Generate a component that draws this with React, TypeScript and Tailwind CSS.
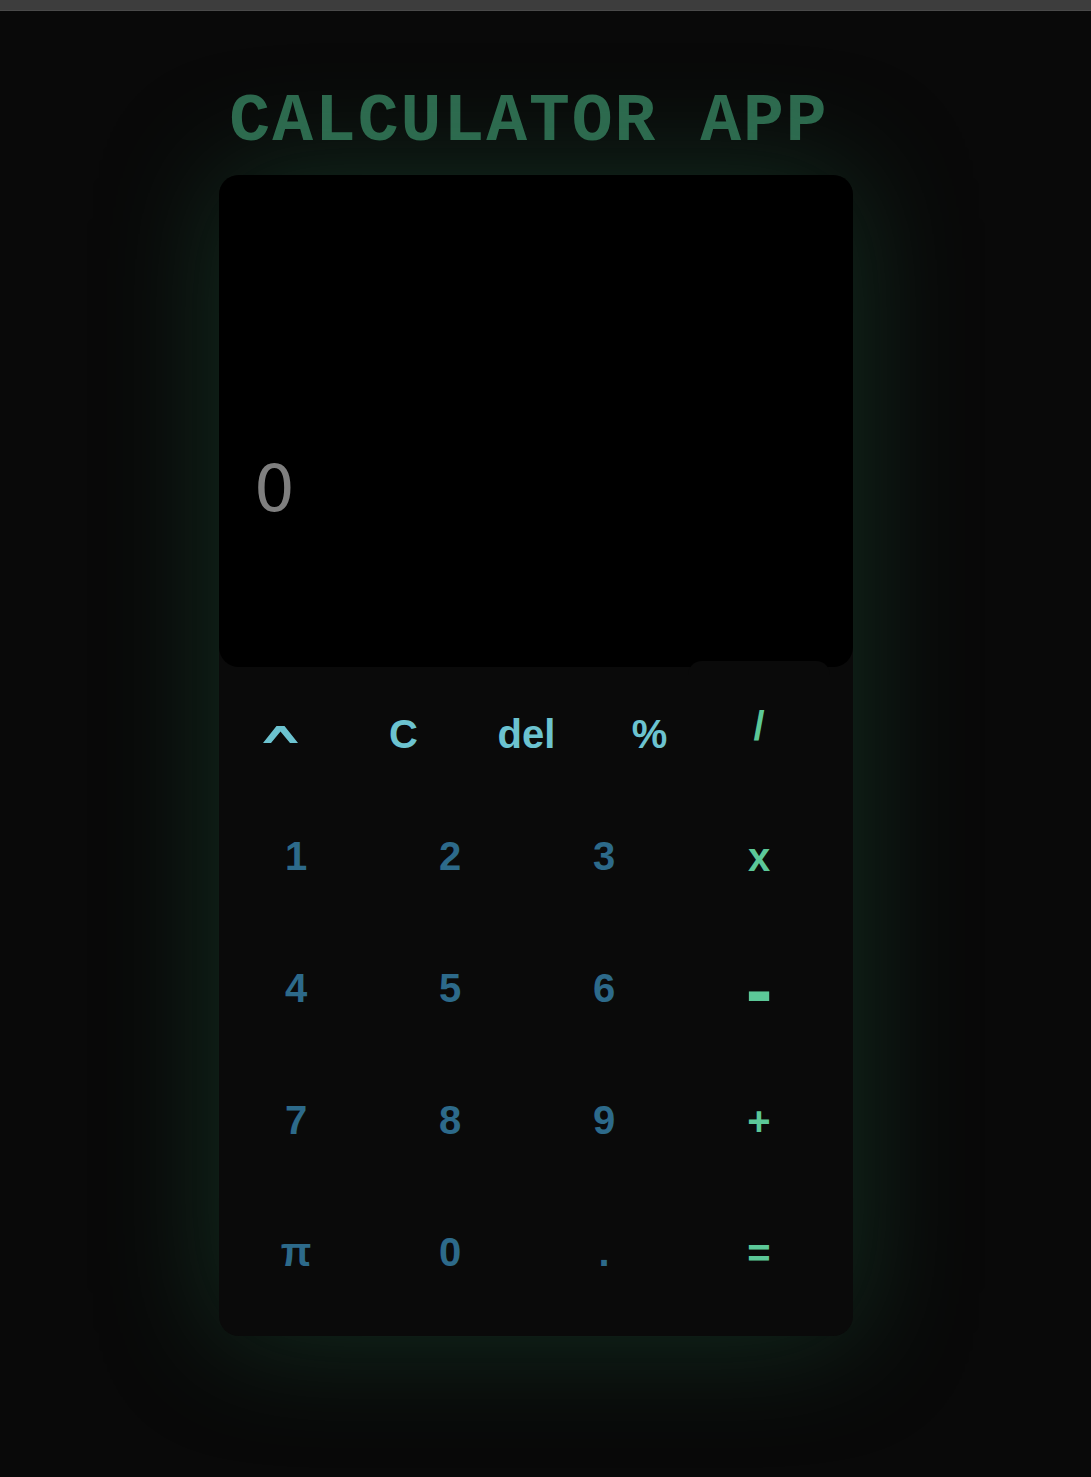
import React from "react";

const topKeys = ["C", "del", "%"];
const digitRows = [
  ["1", "2", "3"],
  ["4", "5", "6"],
  ["7", "8", "9"],
  ["π", "0", "."],
];

function Caret() {
  return (
    <svg width="35" height="17" viewBox="0 0 35 17" aria-hidden="true">
      <polygon points="0,17 13.5,0 21.5,0 35,17 27,17 17.5,5.5 8,17" fill="#6cc3d0" />
    </svg>
  );
}

export default function App() {
  return (
    <div
      className="min-h-screen w-full bg-[#090909]"
      style={{ fontFamily: '"Liberation Sans", Arial, sans-serif' }}
    >
      <div className="h-[11px] w-full bg-[#3d3d3d] border-b border-[#4a4a4a]" />
      <div className="w-[1072px] flex flex-col items-center pt-[77px] pb-[140px]">
        <h1
          className="h-[68px] text-[68px] leading-none font-bold tracking-[2px] text-[#2e6a4f] mb-[19px] mr-[14px]"
          style={{ fontFamily: '"Liberation Mono", "Courier New", monospace' }}
        >
          CALCULATOR APP
        </h1>
        <div className="w-[634px] rounded-[20px] bg-[#0a0a0a] shadow-[0_0_120px_rgba(40,120,80,0.35)]">
          <div className="h-[492px] rounded-[20px] bg-black pt-[282px] pl-[35px]">
            <div
              className="text-[64px] leading-none text-[#7f7f7f]"
              style={{ fontFamily: '"DejaVu Sans", sans-serif' }}
            >
              0
            </div>
          </div>
          <div className="flex pb-[18px] font-bold text-[40px] leading-none">
            <div className="w-[471px] shrink-0">
              <div className="flex h-[123px] pt-[11px] items-center">
                <div className="w-[123px] shrink-0 flex justify-center">
                  <Caret />
                </div>
                {topKeys.map((k) => (
                  <div key={k} className="w-[123px] shrink-0 flex justify-center text-[#6cc3d0]">
                    {k}
                  </div>
                ))}
              </div>
              <div className="grid grid-cols-[154px_154px_154px] auto-rows-[132px]">
                {digitRows.flat().map((d) => (
                  <div key={d} className="flex items-center justify-center text-[#2d6a8a]">
                    {d}
                  </div>
                ))}
              </div>
            </div>
            <div className="w-[142px] shrink-0 ml-[-2px] relative z-10 text-[#5cc898]">
              <div className="-mt-[6px] h-[129px] rounded-t-[14px] bg-[#0a0a0a] flex items-center justify-center">
                /
              </div>
              <div className="h-[132px] flex items-center justify-center pt-[2px]">x</div>
              <div className="h-[132px] flex items-center justify-center pt-[4px] text-[80px]">-</div>
              <div className="h-[132px] flex items-center justify-center pt-[2px]">+</div>
              <div className="h-[132px] flex items-center justify-center pt-[2px]">=</div>
            </div>
          </div>
        </div>
      </div>
    </div>
  );
}
